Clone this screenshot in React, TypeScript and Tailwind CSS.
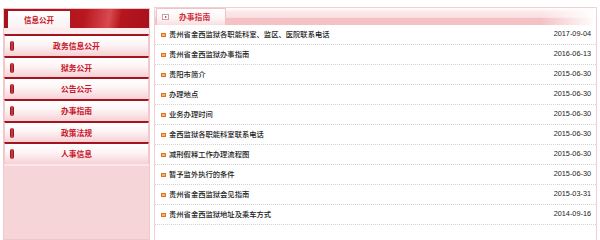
import React from "react";

const menu = ["政务信息公开", "狱务公开", "公告公示", "办事指南", "政策法规", "人事信息"];

const rows = [
  ["贵州省金西监狱各职能科室、监区、医院联系电话", "2017-09-04"],
  ["贵州省金西监狱办事指南", "2016-06-13"],
  ["贵阳市简介", "2015-06-30"],
  ["办理地点", "2015-06-30"],
  ["业务办理时间", "2015-06-30"],
  ["金西监狱各职能科室联系电话", "2015-06-30"],
  ["减刑假释工作办理流程图", "2015-06-30"],
  ["暂予监外执行的条件", "2015-06-30"],
  ["贵州省金西监狱会见指南", "2015-03-31"],
  ["贵州省金西监狱地址及乘车方式", "2014-09-16"],
];

const cjk = { fontFamily: '"Noto Sans CJK SC", "Liberation Sans", sans-serif' };

const App = () => {
  return (
    <div className="w-[600px] h-[240px] overflow-hidden bg-white flex pt-[7px] pl-[3px] pr-[3px] gap-[4px]" style={cjk}>
      {/* left column */}
      <div className="w-[147px] shrink-0 mt-[1px] border border-[#f0c6ca] bg-[#f6d5d8] flex flex-col">
        <div className="h-[19px] flex items-end pl-[4px] bg-[linear-gradient(100deg,#a8121c_0%,#b8171f_55%,#d84a50_72%,#b5161e_80%,#a8121c_100%)]">
          <div className="w-[62px] h-[17px] bg-[linear-gradient(#ffffff,#fbf1f2)] flex items-center justify-center text-[7.5px] font-bold text-[#c0141e]">
            信息公开
          </div>
        </div>
        <div className="h-[6px] bg-[#fcecee]" />
        {menu.map((m) => (
          <div
            key={m}
            className="h-[21.7px] border-t-2 border-[#a3141f] border-x border-x-[#f2c9cd] bg-[linear-gradient(#ffffff_0%,#fdf3f4_45%,#f6d0d5_100%)] flex items-center"
          >
            <span className="ml-[5px] w-[4px] h-[10px] rounded-[2px] bg-[linear-gradient(90deg,#7a0a12,#e0434b,#7a0a12)]" />
            <span className="flex-1 text-center pr-[9px] text-[7.8px] font-bold text-[#c8142a]">{m}</span>
          </div>
        ))}
        <div className="h-[2px] bg-[#fbe6e8]" />
        <div className="flex-1" />
      </div>

      {/* right column */}
      <div className="flex-1 border border-[#f2d0d3] self-start h-[240px]">
        <div className="h-[17px] flex bg-[linear-gradient(180deg,#ffffff_0%,#fce6e8_25%,#fbe0e2_55%,#f4c1c5_60%,#f4c1c5_100%)]">
          <div className="w-[70px] h-[17px] ml-[1px] border border-b-0 border-[#efc3c7] bg-[linear-gradient(#ffffff,#fdf4f5_60%,#f9dde0)] flex items-center">
            <span className="ml-[5px] w-[7px] h-[6px] border border-[#c9a0a4] bg-white flex items-center justify-center">
              <span className="w-0 h-0 border-y-[1.5px] border-y-transparent border-l-[2px] border-l-[#b0202a]" />
            </span>
            <span className="ml-[10px] text-[7.8px] font-bold text-[#d0303c]">办事指南</span>
          </div>
          <div className="flex-1 bg-[linear-gradient(90deg,rgba(255,255,255,0)_85%,#ffffff_100%)]" />
        </div>
        {rows.map(([t, d]) => (
          <div key={t + d} className="h-[20px] border-b border-dotted border-[#d2d2d2] flex items-center pl-[6px] pr-[5px]">
            <span className="w-[5px] h-[4px] border border-[#d9742a] bg-[#f6b46a]" />
            <span className="ml-[3px] text-[7.3px] font-medium text-[#1a1a1a]">{t}</span>
            <span className="ml-auto text-[7.3px] text-[#222]" style={{ fontFamily: '"Liberation Sans", sans-serif' }}>{d}</span>
          </div>
        ))}
      </div>
    </div>
  );
};

export default App;
